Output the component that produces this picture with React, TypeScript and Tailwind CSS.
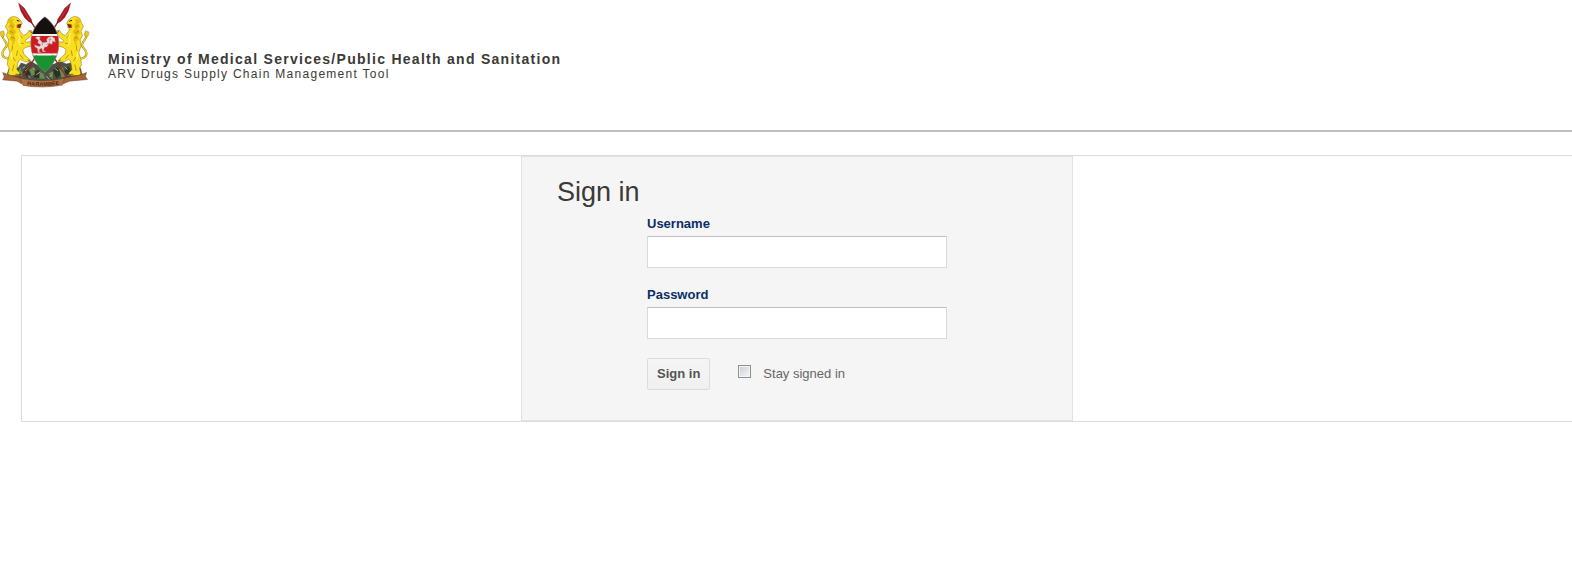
function Lion() {
  return (
    <g strokeLinejoin="round" strokeLinecap="round">
      <path d="M36 176 C22 180 8 174 9 161 C10 147 25 146 22 134 C20 124 11 121 9 108" fill="none" stroke="#8a7114" strokeWidth="6" />
      <path d="M36 176 C22 180 8 174 9 161 C10 147 25 146 22 134 C20 124 11 121 9 108" fill="none" stroke="#f2d51f" strokeWidth="4" />
      <path d="M2 97 L12 93 L16 104 L11 114 L4 109 Z" fill="#e8c81c" stroke="#6b560c" strokeWidth="1" />
      <path
        d="M27 60 C32 50 44 48 54 53 L64 61 L69 71 L64 76 L66 83 L60 88 L64 96 L74 108 L86 100 L90 92 L98 93 L100 101 L92 113 L78 123 L80 128 L96 126 L105 129 L104 137 L94 140 L79 144 L71 151 L74 164 L86 175 L94 182 L91 188 L76 187 L64 180 L58 185 L55 197 L53 211 L62 221 L60 228 L32 229 L26 224 L30 206 L24 196 L26 180 L32 160 L26 140 L28 121 L21 108 L26 94 L18 80 L24 70 Z"
        fill="#fadf20"
        stroke="#7a6210"
        strokeWidth="1.4"
      />
      <path d="M25 66 L33 72 L27 82 L35 88 L27 100 L37 107 L30 120 L40 125 L37 144 L44 132 L49 120 L44 106 L51 96 L43 86 L47 76 L40 66 L45 58 L33 56 Z" fill="#e6bd14" />
      <path d="M34 76 L42 82 M32 94 L41 99 M37 113 L45 116 M40 140 L38 153 M55 154 L52 168 M42 174 L48 184 M44 197 L40 214 M63 133 L73 131 M61 106 L69 115 M63 167 L72 177" fill="none" stroke="#94750c" strokeWidth="2" />
      <path d="M57 101 L62 112 L59 126 L65 138 M36 161 L38 178" fill="none" stroke="#fff27a" strokeWidth="4" />
      <path d="M54 62 L60 64" stroke="#241b04" strokeWidth="3" />
      <path d="M55 75 L67 73 L62 84 L54 83 Z" fill="#a31a15" stroke="#2c1d05" strokeWidth="1" />
      <path d="M93 96 L99 99 M98 131 L104 133 M87 182 L92 184 M50 225 L60 226" stroke="#463608" strokeWidth="2" />
    </g>
  );
}

function Spear() {
  return (
    <g>
      <path d="M75 33 L205 236" stroke="#7b2219" strokeWidth="4" />
      <path d="M75 33 L205 236" stroke="#c65b4c" strokeWidth="1" />
      <path d="M58 9 L76 25 L87 43 L97 58 L99 70 L89 66 L76 53 L65 33 Z" fill="#a91622" stroke="#6e0d15" strokeWidth="1" />
      <path d="M64 16 L90 60" stroke="#d8444c" strokeWidth="2" />
    </g>
  );
}

function CoatOfArms() {
  return (
    <svg className="h-24 w-25 shrink-0" viewBox="2 0 303 291" role="img" aria-label="Coat of arms of Kenya">
      <path d="M24 224 L30 206 L42 203 L57 206 L66 191 L81 196 L95 186 L114 197 L145 193 L165 195 L184 186 L203 194 L216 191 L228 206 L245 205 L251 226 L221 238 L181 246 L137 248 L85 242 L53 236 Z" fill="#4b5042" stroke="#35372e" strokeWidth="1.5" />
      <g fill="#263322">
        <path d="M72 219 L82 205 L94 223 L86 237 Z M104 219 L119 211 L129 238 L105 234 Z M160 215 L175 203 L190 224 L174 237 Z M197 216 L208 201 L221 221 L208 232 Z" />
      </g>
      <g fill="#6a8a4e">
        <path d="M57 219 L64 202 L70 226 Z M91 211 L105 203 L108 226 L98 230 Z M122 220 L133 221 L139 239 L121 239 Z M149 223 L164 215 L161 241 Z M182 211 L192 203 L201 231 L188 236 Z M213 218 L222 210 L228 230 L217 230 Z" />
      </g>
      <path d="M70 207 L78 202 M78 215 L87 207 M86 229 L94 236 M112 226 L125 218 M142 230 L151 241 M169 208 L178 215 M198 203 L207 211 M207 229 L215 223" fill="none" stroke="#a9a990" strokeWidth="3" />
      <path d="M66 229 L73 234 M101 206 L108 211 M152 234 L158 227 M193 222 L200 226" fill="none" stroke="#c9a83c" strokeWidth="3" />

      <Spear />
      <g transform="matrix(-1 0 0 1 274 0)">
        <Spear />
      </g>
      <Lion />
      <g transform="matrix(-1 0 0 1 273 0)">
        <Lion />
      </g>

      <clipPath id="shield">
        <path d="M138 51 C116 67 101 88 96 116 C92 151 102 189 138 219 C174 189 184 151 179 116 C174 88 159 67 138 51 Z" />
      </clipPath>
      <g clipPath="url(#shield)">
        <path d="M90 45 H188 V104 H90 Z" fill="#17100f" />
        <path d="M90 103 H188 V109 H90 Z" fill="#f4f1ef" />
        <path d="M90 109 H188 V163 H90 Z" fill="#cf1a20" />
        <path d="M90 162 H188 V168 H90 Z" fill="#f4f1ef" />
        <path d="M90 168 H188 V222 H90 Z" fill="#17942f" />
      </g>
      <path d="M138 51 C116 67 101 88 96 116 C92 151 102 189 138 219 C174 189 184 151 179 116 C174 88 159 67 138 51 Z" fill="none" stroke="#8b8480" strokeWidth="2" />
      <path
        d="M108 115 L116 110 L125 113 L122 119 L131 129 L144 127 L143 119 L148 113 L159 110 L168 116 L170 129 L162 125 L160 135 L151 132 L145 142 L137 144 L134 152 L142 157 L132 158 L128 147 L122 149 L121 156 L129 160 L117 160 L115 147 L107 142 L107 135 L114 139 L122 140 L125 136 L116 130 L118 123 L114 118 Z"
        fill="#e7d9d6"
        stroke="#a0504d"
        strokeWidth="1.2"
      />
      <path d="M128 130 L132 137 M149 119 L156 118 L151 126 M143 135 L152 130" fill="none" stroke="#956b68" strokeWidth="2" />

      <path d="M10 220 L31 228 L68 238 L67 254 L54 246 L10 242 L15 232 Z M264 220 L242 228 L193 238 L194 254 L212 246 L267 241 L261 232 Z" fill="#a46338" stroke="#6b3d20" strokeWidth="1.5" />
      <path d="M63 238 Q132 252 198 237 L191 258 Q132 269 72 259 Z" fill="#b07145" stroke="#6b3d20" strokeWidth="1.5" />
      <path id="motto" d="M70 255 Q132 267 196 254" fill="none" />
      <text fill="#4c2b18" fontFamily="Liberation Sans, sans-serif" fontSize="17" fontWeight="700" aria-hidden="true">
        <textPath href="#motto" startOffset="50%" textAnchor="middle">HARAMBEE</textPath>
      </text>
    </svg>
  );
}

type FieldProps = { id: string; label: string; type: string };

function Field({ id, label, type }: FieldProps) {
  return (
    <div className="mb-[19px]">
      <label htmlFor={id} className="mb-1 block text-[13px] leading-4 font-bold text-[#0a2f66]">
        {label}
      </label>
      <input
        id={id}
        name={id}
        type={type}
        className="block h-8 w-full border border-[#d9d9d9] border-t-[#c0c0c0] bg-white px-2 text-[15px] outline-none focus:border-[#4d90fe]"
      />
    </div>
  );
}

export default function App() {
  return (
    <div className="min-h-screen bg-white font-['Liberation_Sans',Arial,sans-serif] text-[#3b3a36]">
      <header className="flex min-h-33 items-start border-b-2 border-[#bfbfbf]">
        <CoatOfArms />
        <div className="pt-[52px] pl-2 tracking-[0.08em]">
          <h1 className="text-sm leading-[14px] font-bold">Ministry of Medical Services/Public Health and Sanitation</h1>
          <p className="text-xs leading-4">ARV Drugs Supply Chain Management Tool</p>
        </div>
      </header>

      <main className="mt-[23px] ml-[21px] border border-r-0 border-[#dcdcdc]">
        <section className="mx-auto w-full max-w-[552px] border border-[#e2e2e2] bg-[#f5f5f5] px-[35px] pt-[18px] pb-[30px]">
          <h2 className="mb-[7px] text-[27px] leading-[34px]">Sign in</h2>
          <form className="mx-auto w-full max-w-[300px]" onSubmit={(event) => event.preventDefault()}>
            <Field id="username" label="Username" type="text" />
            <Field id="password" label="Password" type="password" />
            <div className="flex items-center">
              <button
                type="submit"
                className="h-8 rounded-xs border border-[#dcdcdc] bg-linear-to-b from-[#f5f5f5] to-[#f0f0f0] px-[9px] text-[13px] font-bold text-[#555]"
              >
                Sign in
              </button>
              <input
                id="remember"
                type="checkbox"
                className="mr-3 mb-1.5 ml-7 size-[13px] appearance-none border border-[#8e8f8f] bg-linear-to-br from-[#c8ccd3] to-[#f8f8f8] shadow-[inset_0_0_0_1px_#f4f4f4] checked:from-[#4b6a97] checked:to-[#4b6a97]"
              />
              <label htmlFor="remember" className="text-[13px] text-[#666]">
                Stay signed in
              </label>
            </div>
          </form>
        </section>
      </main>
    </div>
  );
}
